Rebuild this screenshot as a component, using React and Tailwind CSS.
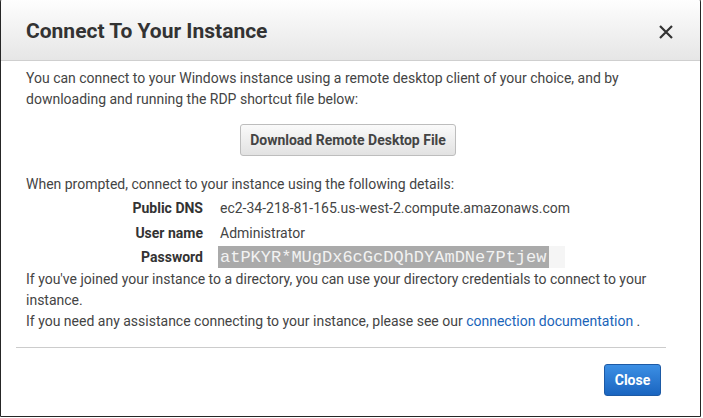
import React from 'react';

const details = [
  { label: 'Public DNS', value: 'ec2-34-218-81-165.us-west-2.compute.amazonaws.com', h: 'h-[26px]' },
  { label: 'User name', value: 'Administrator', h: 'h-[24px]' },
];

const App = () => {
  return (
    <div className="w-[703px] h-[418px] overflow-hidden bg-white font-['Roboto','Liberation_Sans',sans-serif] text-[14px] text-[#444]">
      <div className="w-[701px] h-[421px] -mt-[4px] rounded-t-[6px] border border-[#262626] bg-white flex flex-col">
        {/* Header */}
        <div className="h-[64px] pt-[6px] flex items-center justify-between pl-[25px] pr-[26px] border-b border-[#cfcfcf] bg-gradient-to-b from-white to-[#e6e6e6] rounded-t-[6px]">
          <h1 className="text-[21px] font-bold text-[#333]">Connect To Your Instance</h1>
          <button className="text-[#333]" aria-label="Close">
            <svg width="16" height="16" viewBox="0 0 16 16" fill="none" stroke="currentColor" strokeWidth="2.2">
              <path d="M2 2 L14 14 M14 2 L2 14" />
            </svg>
          </button>
        </div>

        {/* Body */}
        <div className="pl-[25px] pr-[30px] pt-[7px] leading-[21px]">
          <p>
            You can connect to your Windows instance using a remote desktop client of your choice, and by downloading and running the RDP shortcut file below:
          </p>
          <div className="flex justify-center pt-[14px] pb-[18px]">
            <button className="h-[32px] w-[216px] rounded-[3px] border border-[#bdbdbd] bg-gradient-to-b from-[#fafafa] to-[#e2e2e2] font-bold text-[#444]">
              Download Remote Desktop File
            </button>
          </div>
          <p>When prompted, connect to your instance using the following details:</p>
          <div className="flex flex-col">
            {details.map((d) => (
              <div key={d.label} className={`flex items-center ${d.h}`}>
                <span className="w-[177px] text-right font-bold text-[#333]">{d.label}</span>
                <span className="pl-[17px]">{d.value}</span>
              </div>
            ))}
            <div className="flex items-center h-[24px]">
              <span className="w-[177px] text-right font-bold text-[#333]">Password</span>
              <span className="ml-[15px] flex h-[22px] items-center bg-[#f5f5f5] pr-[16px]">
                <span className="h-[22px] flex items-center bg-[#aaaaaa] pl-[2px] pr-[3px] font-['Liberation_Mono','Courier_New',monospace] text-[17px] text-[#f2f2f2]">
                  atPKYR*MUgDx6cGcDQhDYAmDNe7Ptjew
                </span>
              </span>
            </div>
          </div>
          <p>
            If you've joined your instance to a directory, you can use your directory credentials to connect to your instance.
          </p>
          <p>
            If you need any assistance connecting to your instance, please see our{' '}
            <a href="#" className="text-[#1a64b9]">connection documentation</a> .
          </p>
        </div>

        {/* Footer */}
        <div className="mt-[15px] ml-[15px] mr-[34px] border-t border-[#cccccc]" />
        <div className="flex justify-end pt-[16px] pr-[39px]">
          <button className="h-[32px] w-[57px] rounded-[3px] border border-[#1d5aa5] bg-gradient-to-b from-[#3c8fe4] to-[#1a65c0] font-bold text-white">
            Close
          </button>
        </div>
      </div>
    </div>
  );
};

export default App;
